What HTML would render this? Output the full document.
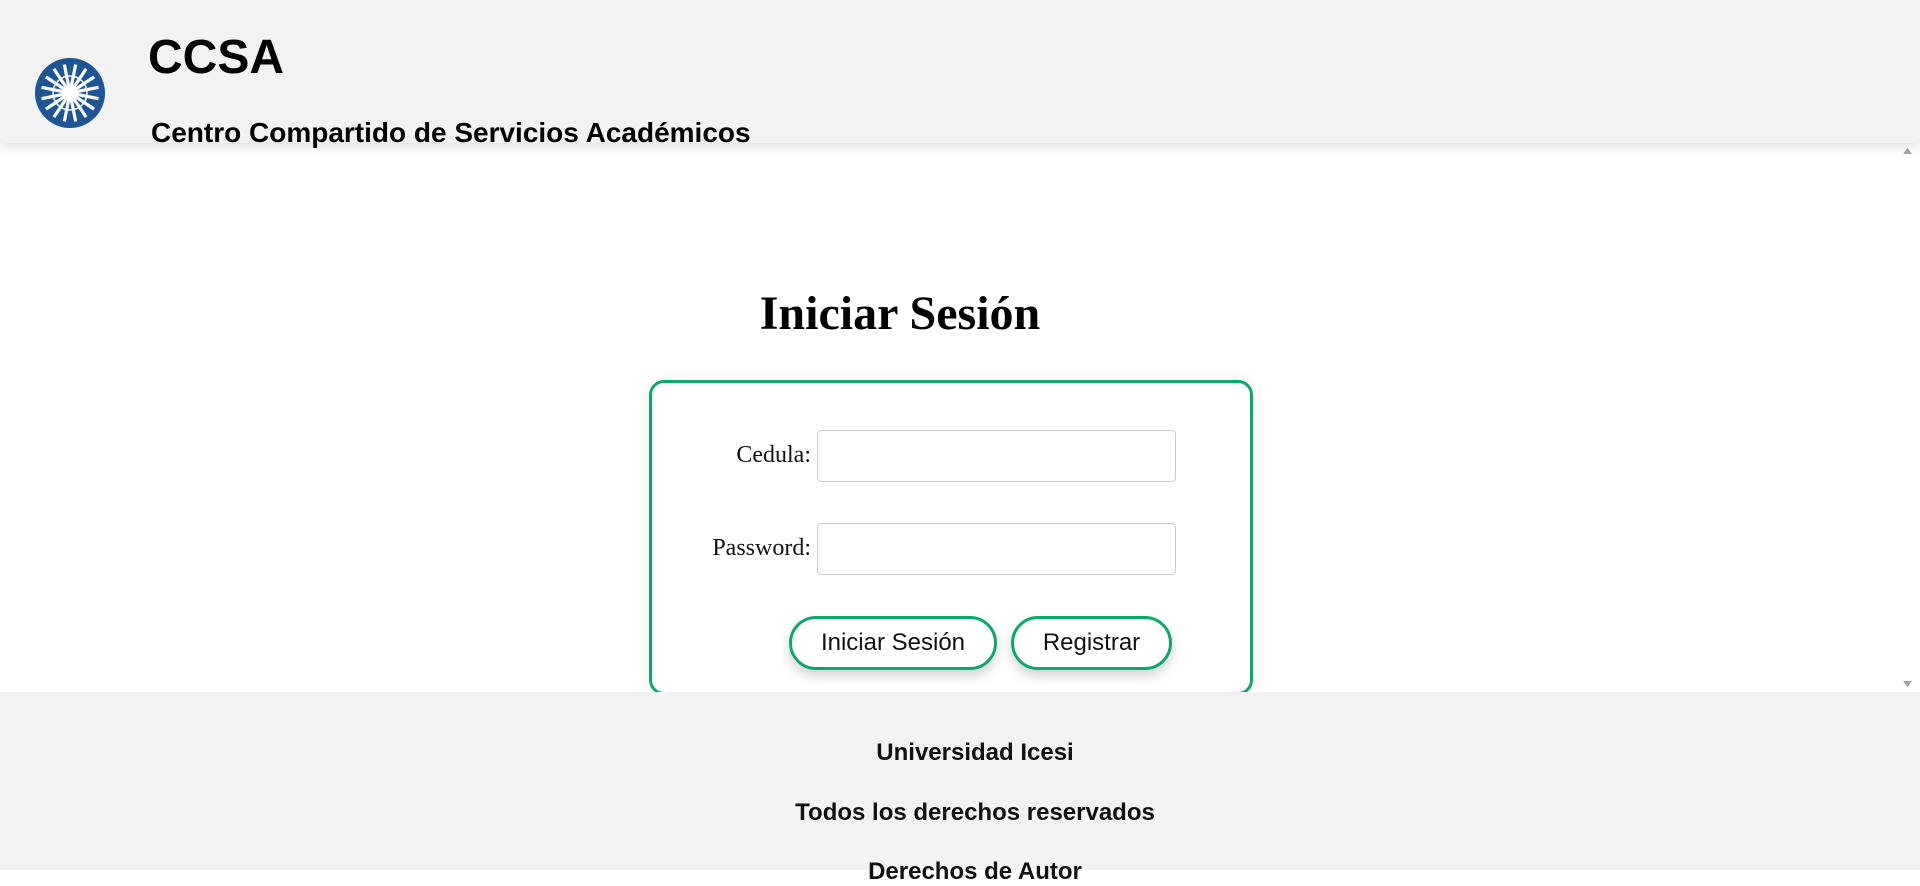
<!DOCTYPE html>
<html><head><meta charset="utf-8"><style>
*{margin:0;padding:0;box-sizing:border-box}
html,body{width:1920px;height:870px;overflow:hidden;background:#fff;font-family:"Liberation Sans",sans-serif}
.header{position:absolute;left:0;top:0;width:1920px;height:143px;background:#f2f2f2;box-shadow:0 4px 10px rgba(0,0,0,0.12);z-index:3}
.logo{position:absolute;left:34px;top:57px}
.h1{position:absolute;left:148px;top:30px;font-size:48px;font-weight:bold;color:#000}
.sub{position:absolute;left:151px;top:117px;font-size:28px;font-weight:bold;color:#000;white-space:nowrap}
.title{position:absolute;left:0;width:1800px;top:286px;text-align:center;font-family:"Liberation Serif",serif;font-weight:bold;font-size:48px;color:#000}
.box{position:absolute;left:649px;top:380px;width:604px;height:315px;border:3px solid #0aa86a;border-radius:15px;box-shadow:0 0 14px rgba(0,0,0,0.08)}
.lbl{position:absolute;font-family:"Liberation Serif",serif;font-size:24px;color:#111;text-align:right;width:200px;left:611px}
.inp{position:absolute;left:817px;width:359px;height:52px;border:1px solid #ccc;border-radius:4px;background:#fff}
.btn{position:absolute;top:616px;height:54px;border:3px solid #0aa86a;border-radius:27px;background:#fff;font-size:24px;color:#111;display:flex;align-items:center;justify-content:center;box-shadow:0 6px 12px rgba(0,0,0,0.18)}
.sb{position:absolute;left:1895px;top:143px;width:25px;height:549px;background:#fff}
.footer{position:absolute;left:0;top:692px;width:1920px;height:178px;background:#f2f2f2;z-index:4;text-align:center}
.footer p{position:absolute;left:30px;width:1890px;font-size:24px;font-weight:bold;color:#111}
</style></head><body>
<div class="header">
<svg class="logo" width="72" height="72" viewBox="-36 -36 72 72">
<circle r="35" fill="#1d5597"/>
<g stroke="#fff" stroke-width="3.2">
<line x1="0" y1="-9" x2="0" y2="-29" transform="rotate(11.25)"/><line x1="0" y1="-9" x2="0" y2="-29" transform="rotate(33.75)"/><line x1="0" y1="-9" x2="0" y2="-29" transform="rotate(56.25)"/><line x1="0" y1="-9" x2="0" y2="-29" transform="rotate(78.75)"/><line x1="0" y1="-9" x2="0" y2="-29" transform="rotate(101.25)"/><line x1="0" y1="-9" x2="0" y2="-29" transform="rotate(123.75)"/><line x1="0" y1="-9" x2="0" y2="-29" transform="rotate(146.25)"/><line x1="0" y1="-9" x2="0" y2="-29" transform="rotate(168.75)"/><line x1="0" y1="-9" x2="0" y2="-29" transform="rotate(191.25)"/><line x1="0" y1="-9" x2="0" y2="-29" transform="rotate(213.75)"/><line x1="0" y1="-9" x2="0" y2="-29" transform="rotate(236.25)"/><line x1="0" y1="-9" x2="0" y2="-29" transform="rotate(258.75)"/><line x1="0" y1="-9" x2="0" y2="-29" transform="rotate(281.25)"/><line x1="0" y1="-9" x2="0" y2="-29" transform="rotate(303.75)"/><line x1="0" y1="-9" x2="0" y2="-29" transform="rotate(326.25)"/><line x1="0" y1="-9" x2="0" y2="-29" transform="rotate(348.75)"/>
</g>
<circle r="17" fill="none" stroke="#fff" stroke-width="1.5"/>
<circle r="9" fill="#fff"/>
</svg>
<div class="h1">CCSA</div>
<div class="sub">Centro Compartido de Servicios Académicos</div>
</div>
<div class="title">Iniciar Sesión</div>
<div class="box"></div>
<div class="lbl" style="top:442px">Cedula:</div>
<div class="inp" style="top:430px"></div>
<div class="lbl" style="top:535px">Password:</div>
<div class="inp" style="top:523px"></div>
<div class="btn" style="left:789px;width:208px">Iniciar Sesión</div>
<div class="btn" style="left:1011px;width:161px">Registrar</div>
<div class="sb">
<svg width="25" height="549" style="position:absolute;left:0;top:0"><polygon points="8,11 17,11 12.5,5" fill="#a3a3a3"/><polygon points="8,538 17,538 12.5,544" fill="#a3a3a3"/></svg>
</div>
<div class="footer">
<p style="top:47px">Universidad Icesi</p>
<p style="top:107px">Todos los derechos reservados</p>
<p style="top:166px">Derechos de Autor</p>
</div>
</body></html>
